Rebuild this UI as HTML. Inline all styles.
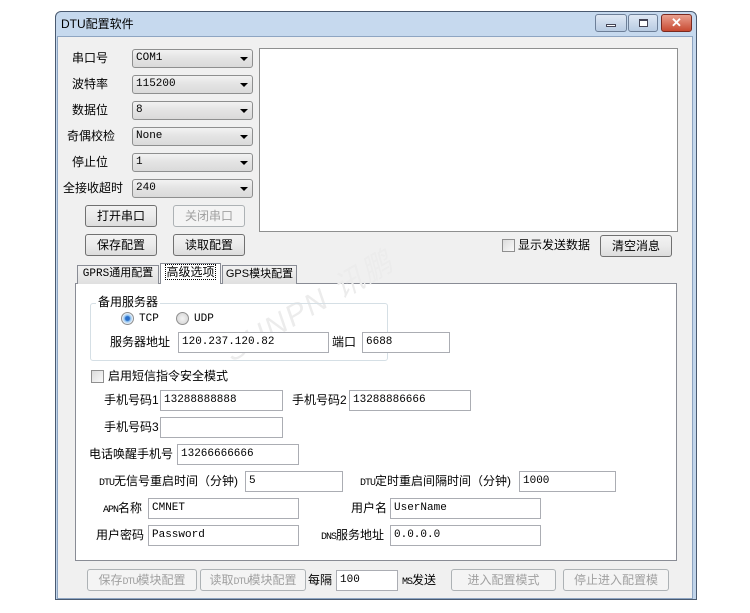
<!DOCTYPE html>
<html><head><meta charset="utf-8"><style>
*{box-sizing:border-box;margin:0;padding:0}
body{width:750px;height:613px;background:#fff;position:relative;overflow:hidden;font-family:"Liberation Sans","Noto Sans CJK SC",sans-serif;font-size:12px;color:#000}
.a{position:absolute}
.win{left:55px;top:11px;width:642px;height:589px;background:linear-gradient(#c6d9ee,#c0d4ea);border:1px solid #4a5a70;border-radius:6px 6px 0 0}
.client{left:57px;top:36px;width:636px;height:563px;background:#f0f0f0;border:1px solid #8ea5c2}
.lbl{position:absolute;white-space:nowrap;line-height:14px}
.n{font-family:"Liberation Mono",monospace;font-size:10px;letter-spacing:-1px}
.cb{position:absolute;height:19px;border:1px solid #8e8f8f;border-radius:3px;background:linear-gradient(#f2f2f2,#e3e3e3 50%,#dadada);font-family:"Liberation Mono","Noto Sans CJK SC",monospace;font-size:11px;line-height:17px;padding-left:3px}
.cb:after{content:"";position:absolute;right:4px;top:7px;border-left:4px solid transparent;border-right:4px solid transparent;border-top:4px solid #000}
.btn{position:absolute;height:22px;border:1px solid #707070;border-radius:3px;background:linear-gradient(#f2f2f2,#ebebeb 50%,#dcdcdc);text-align:center;line-height:20px;font-size:12px}
.dis{color:#a0a0a0;border-color:#adb2b5;background:#f4f4f4}
.in{position:absolute;height:21px;background:#fff;border:1px solid #abadb3;font-family:"Liberation Mono","Noto Sans CJK SC",monospace;font-size:11px;line-height:19px;padding-left:3px}
.chk{position:absolute;width:13px;height:13px;border:1px solid #8f8f8f;background:linear-gradient(135deg,#dcdcdc,#fafafa)}
.rad{position:absolute;width:13px;height:13px;border-radius:50%;border:1px solid #8f8f8f;background:radial-gradient(#f4f4f4,#d0d0d0)}
.tab{position:absolute;top:265px;height:19px;border:1px solid #898c95;border-bottom:none;background:linear-gradient(#f2f2f2,#e0e0e0);text-align:center;line-height:17px;font-size:12px}
</style></head><body>
<div class="a win"></div>
<div class="lbl" style="left:61px;top:17px;font-size:12px">DTU配置软件</div>
<div class="a" style="left:595px;top:14px;width:32px;height:18px;border:1px solid #6d7f98;border-radius:3px;background:linear-gradient(#dfe8f4,#b8cbe2)"><div class="a" style="left:10px;top:9px;width:10px;height:3px;background:#fff;border:1px solid #445"></div></div>
<div class="a" style="left:628px;top:14px;width:30px;height:18px;border:1px solid #6d7f98;border-radius:3px;background:linear-gradient(#dfe8f4,#b8cbe2)"><div class="a" style="left:10px;top:4px;width:9px;height:8px;border:1px solid #445;border-top-width:2px;background:#fff"></div></div>
<div class="a" style="left:661px;top:14px;width:31px;height:18px;border:1px solid #7a2a20;border-radius:3px;background:linear-gradient(#e9a08f,#c84a32);color:#fff;font-weight:bold;text-align:center;line-height:16px;font-size:13px">✕</div>
<div class="a client"></div>

<div class="lbl" style="left:72px;top:51px">串口号</div>
<div class="lbl" style="left:72px;top:77px">波特率</div>
<div class="lbl" style="left:72px;top:103px">数据位</div>
<div class="lbl" style="left:67px;top:129px">奇偶校检</div>
<div class="lbl" style="left:72px;top:155px">停止位</div>
<div class="lbl" style="left:63px;top:181px">全接收超时</div>
<div class="cb" style="left:132px;top:49px;width:121px">COM1</div>
<div class="cb" style="left:132px;top:75px;width:121px">115200</div>
<div class="cb" style="left:132px;top:101px;width:121px">8</div>
<div class="cb" style="left:132px;top:127px;width:121px">None</div>
<div class="cb" style="left:132px;top:153px;width:121px">1</div>
<div class="cb" style="left:132px;top:179px;width:121px">240</div>
<div class="a" style="left:259px;top:48px;width:419px;height:184px;background:#fff;border:1px solid #8e8f8f"></div>
<div class="btn" style="left:85px;top:205px;width:72px">打开串口</div>
<div class="btn dis" style="left:173px;top:205px;width:72px">关闭串口</div>
<div class="btn" style="left:85px;top:234px;width:72px">保存配置</div>
<div class="btn" style="left:173px;top:234px;width:72px">读取配置</div>
<div class="chk" style="left:502px;top:239px"></div>
<div class="lbl" style="left:518px;top:238px">显示发送数据</div>
<div class="btn" style="left:600px;top:235px;width:72px">清空消息</div>

<div class="a" style="left:75px;top:283px;width:602px;height:278px;border:1px solid #898c95;background:#fff"></div>
<div class="tab" style="left:77px;width:82px;font-family:'Liberation Mono','Noto Sans CJK SC',monospace;font-size:11px">GPRS通用配置</div>
<div class="tab" style="left:160px;top:263px;height:21px;width:61px;background:#fff"><span style="outline:1px dotted #000">高级选项</span></div>
<div class="tab" style="left:222px;width:75px;font-size:11px">GPS模块配置</div>

<div class="lbl" style="left:215px;top:300px;transform:rotate(-30deg);color:#ececec;font-size:30px;font-style:italic;letter-spacing:2px">SUNPN 讯鹏</div>

<div class="a" style="left:90px;top:303px;width:298px;height:58px;border:1px solid #d5dfe5;border-radius:3px"></div>
<div class="lbl" style="left:96px;top:295px;background:#fff;padding:0 2px">备用服务器</div>
<div class="rad" style="left:121px;top:312px;background:radial-gradient(#2a6fc9 2px,#8cc0ef 3px,#e4eef8 5px)"></div>
<div class="lbl" style="left:139px;top:312px;font-family:'Liberation Mono',monospace;font-size:11px">TCP</div>
<div class="rad" style="left:176px;top:312px"></div>
<div class="lbl" style="left:194px;top:312px;font-family:'Liberation Mono',monospace;font-size:11px">UDP</div>
<div class="lbl" style="left:110px;top:335px">服务器地址</div>
<div class="in" style="left:178px;top:332px;width:151px">120.237.120.82</div>
<div class="lbl" style="left:332px;top:335px">端口</div>
<div class="in" style="left:362px;top:332px;width:88px">6688</div>

<div class="chk" style="left:91px;top:370px"></div>
<div class="lbl" style="left:108px;top:369px">启用短信指令安全模式</div>
<div class="lbl" style="left:104px;top:393px">手机号码1</div>
<div class="in" style="left:160px;top:390px;width:123px">13288888888</div>
<div class="lbl" style="left:292px;top:393px">手机号码2</div>
<div class="in" style="left:349px;top:390px;width:122px">13288886666</div>
<div class="lbl" style="left:104px;top:420px">手机号码3</div>
<div class="in" style="left:160px;top:417px;width:123px"></div>
<div class="lbl" style="left:89px;top:447px">电话唤醒手机号</div>
<div class="in" style="left:177px;top:444px;width:122px">13266666666</div>
<div class="lbl" style="left:99px;top:474px"><span class="n">DTU</span>无信号重启时间（分钟)</div>
<div class="in" style="left:245px;top:471px;width:98px">5</div>
<div class="lbl" style="left:360px;top:474px"><span class="n">DTU</span>定时重启间隔时间（分钟)</div>
<div class="in" style="left:519px;top:471px;width:97px">1000</div>
<div class="lbl" style="left:103px;top:501px"><span class="n">APN</span>名称</div>
<div class="in" style="left:148px;top:498px;width:151px">CMNET</div>
<div class="lbl" style="left:351px;top:501px">用户名</div>
<div class="in" style="left:390px;top:498px;width:151px">UserName</div>
<div class="lbl" style="left:96px;top:528px">用户密码</div>
<div class="in" style="left:148px;top:525px;width:151px">Password</div>
<div class="lbl" style="left:321px;top:528px"><span class="n">DNS</span>服务地址</div>
<div class="in" style="left:390px;top:525px;width:151px">0.0.0.0</div>

<div class="btn dis" style="left:87px;top:569px;width:110px">保存<span class="n">DTU</span>模块配置</div>
<div class="btn dis" style="left:200px;top:569px;width:106px">读取<span class="n">DTU</span>模块配置</div>
<div class="lbl" style="left:308px;top:573px">每隔</div>
<div class="in" style="left:336px;top:570px;width:62px">100</div>
<div class="lbl" style="left:402px;top:573px"><span class="n">MS</span>发送</div>
<div class="btn dis" style="left:451px;top:569px;width:105px">进入配置模式</div>
<div class="btn dis" style="left:563px;top:569px;width:106px">停止进入配置模</div>
</body></html>
